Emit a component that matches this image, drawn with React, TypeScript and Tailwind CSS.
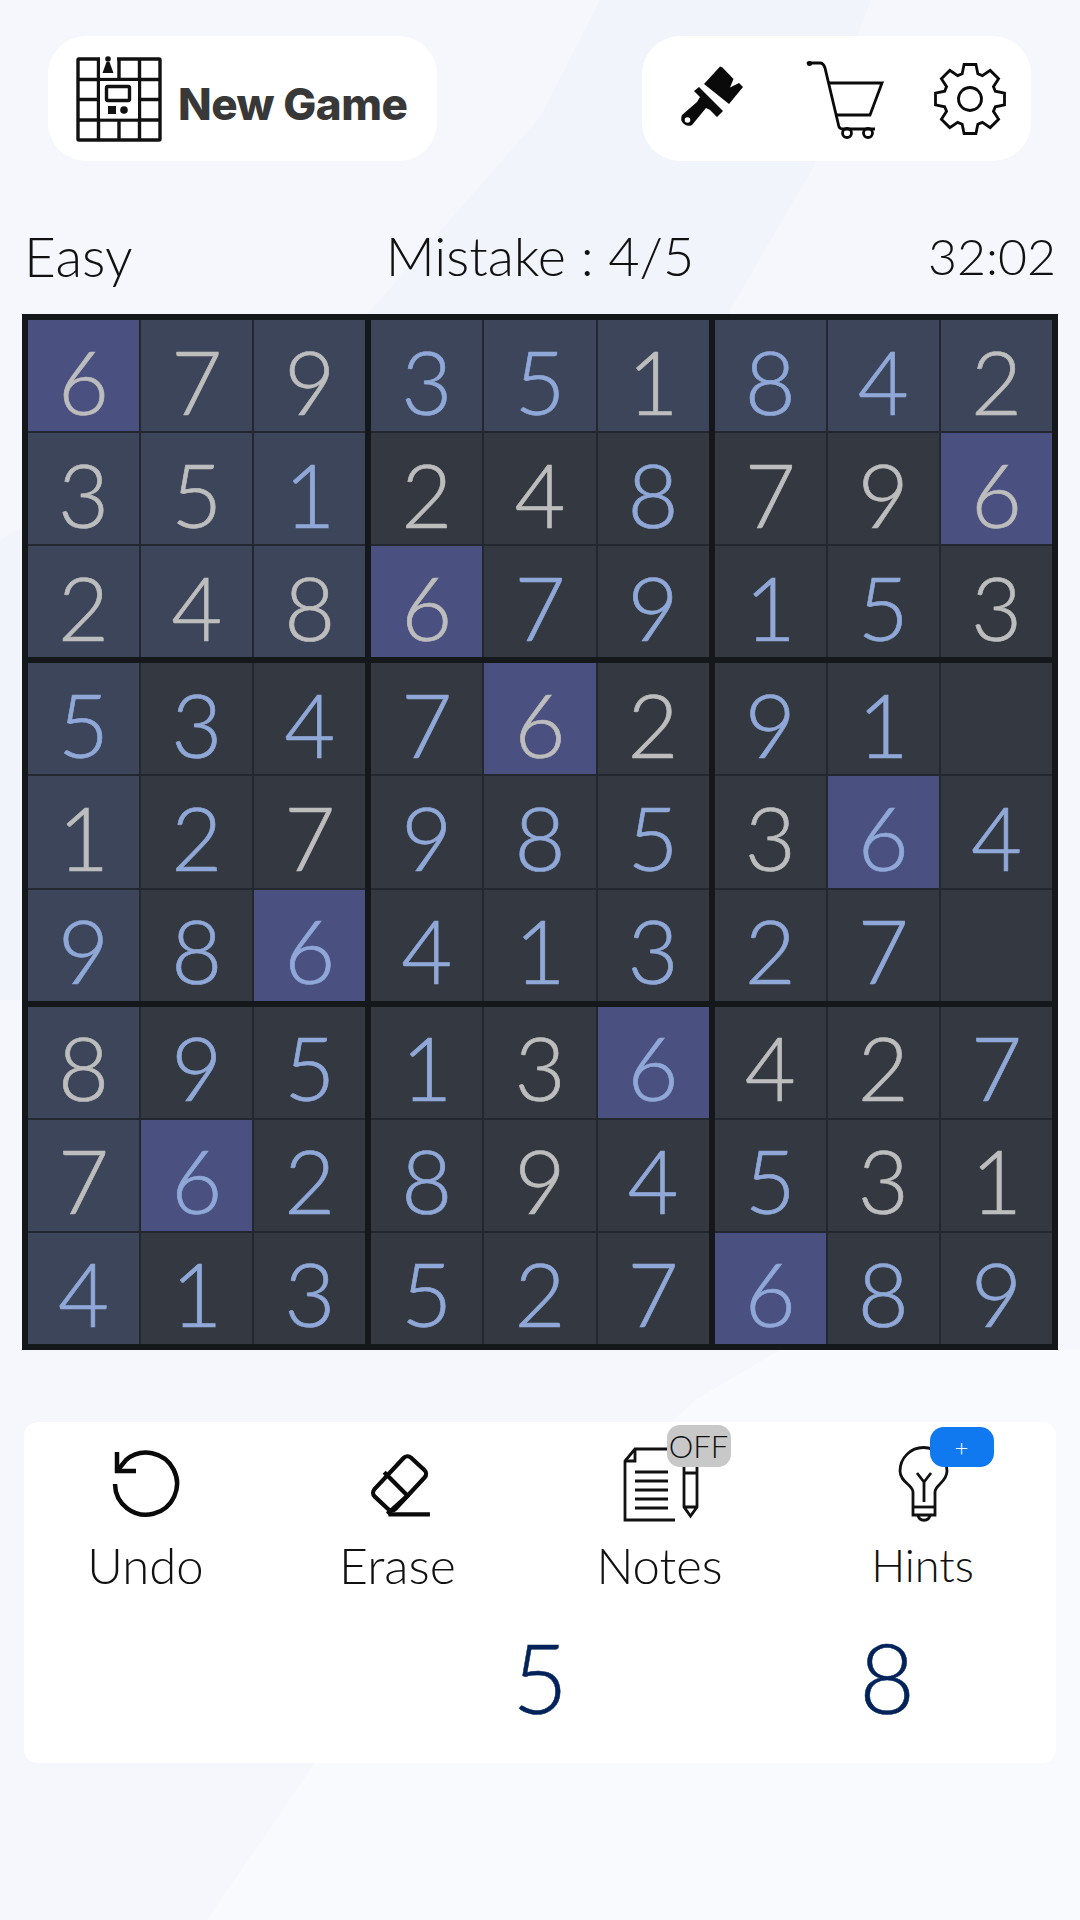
const F = "font-['Lato','Liberation_Sans',sans-serif]";

const BOARD = [
  "679351842",
  "351248796",
  "248679153",
  "534762910",
  "127985364",
  "986413270",
  "895136427",
  "762894531",
  "413527689",
];
const GREY = [
  "111001001",
  "110110111",
  "111100001",
  "000011000",
  "101000100",
  "000000000",
  "100010110",
  "100010011",
  "000000000",
];

function Cell({ r, c }: { r: number; c: number }) {
  const v = BOARD[r][c];
  const same = v === "6";
  const hi = r === 0 || c === 0 || (r < 3 && c < 3);
  const grey = GREY[r][c] === "1";
  return (
    <div
      className={`flex items-center justify-center pt-[10px] text-[88px] font-light leading-none [-webkit-text-stroke:0.7px] ${
        same ? "bg-[#4a5180]" : hi ? "bg-[#3c4559]" : "bg-[#343840]"
      } ${grey ? "text-[#bdbdbd]" : "text-[#8fa8d8]"}`}
    >
      {v === "0" ? "" : v}
    </div>
  );
}

function Box({ br, bc }: { br: number; bc: number }) {
  const cells = [];
  for (let r = 0; r < 3; r++)
    for (let c = 0; c < 3; c++)
      cells.push(<Cell key={`${r}${c}`} r={br * 3 + r} c={bc * 3 + c} />);
  return <div className="grid grid-cols-3 grid-rows-3 gap-[2px] bg-[#23272f]">{cells}</div>;
}

function BoardIcon() {
  return (
    <svg width="86" height="86" viewBox="0 0 86 86" fill="none" stroke="#111" strokeWidth="3.4">
      <rect x="2" y="3" width="82" height="81" rx="1" />
      <path d="M22.500 3V84M43 3V23M43 64V84M63.500 3V84M2 23.500H84M2 43.500H22.500M63.500 43.500H84M2 64H84" />
      <rect x="24" y="25" width="38" height="37.500" fill="#fff" stroke="none" />
      <rect x="30.500" y="30.500" width="23" height="14" rx="1.500" />
      <rect x="32" y="50" width="8" height="8" fill="#111" stroke="none" />
      <circle cx="48" cy="54" r="3.800" fill="#111" stroke="none" />
      <rect x="24" y="0" width="17" height="21.500" fill="#fff" stroke="none" />
      <circle cx="32" cy="3" r="2.800" fill="#111" stroke="none" />
      <path d="M30.500 6H33.500L37.500 17H26.500Z" fill="#111" stroke="none" />
    </svg>
  );
}

function BrushIcon() {
  return (
    <svg width="90" height="90" viewBox="0 0 90 90" fill="#0a0a0a">
      <path d="M52 12.500L54.500 13.500L65.500 25L62 33.500L71 29L75 33L61 50L36 30Z" strokeLinejoin="round" />
      <path
        fillRule="evenodd"
        d="M31 33L55 57L49 63L42 56L38 54L24 71A7.500 7.500 0 0 1 14 61L29 48L32 43L26 37ZM19.500 63.200A2.800 2.800 0 1 0 19.500 68.800A2.800 2.800 0 1 0 19.500 63.200Z"
      />
    </svg>
  );
}

function CartIcon() {
  return (
    <svg width="80" height="80" viewBox="0 0 80 80" fill="none" stroke="#0a0a0a" strokeWidth="2.800">
      <path d="M3 4H15C18 4 19 6 20 9L34 68" strokeLinecap="round" />
      <circle cx="4.500" cy="4.500" r="2.500" fill="#0a0a0a" stroke="none" />
      <path d="M23 24H77L65 56H30" />
      <path d="M34 68C36 70 36 70 40 70H70" />
      <circle cx="42" cy="74" r="4.500" />
      <circle cx="63" cy="74" r="4.500" />
    </svg>
  );
}

function GearIcon() {
  const n = 8;
  const ro = 35,
    ri = 26.5;
  let d = "";
  for (let i = 0; i < n; i++) {
    const a = (i / n) * Math.PI * 2 - Math.PI / 2;
    const w1 = 0.3,
      w2 = 0.17;
    const pts = [
      [ri, a - w1],
      [ro, a - w2],
      [ro, a + w2],
      [ri, a + w1],
    ];
    for (const [rad, t] of pts) {
      const x = 36 + rad * Math.cos(t);
      const y = 36 + rad * Math.sin(t);
      d += `${d ? "L" : "M"}${x.toFixed(2)} ${y.toFixed(2)}`;
    }
  }
  return (
    <svg width="72" height="72" viewBox="0 0 72 72" fill="none" stroke="#0a0a0a" strokeWidth="2.800" strokeLinejoin="miter">
      <path d={d + "Z"} />
      <circle cx="36" cy="36" r="11.500" />
    </svg>
  );
}

function UndoIcon() {
  return (
    <svg className="mb-[5px]" width="68" height="68" viewBox="0 0 68 68" fill="none" stroke="#0a0a0a" strokeWidth="4.500">
      <path d="M3 34A31 31 0 1 0 14 10L5 21" />
      <path d="M5 2V21H24" />
    </svg>
  );
}

function EraseIcon() {
  return (
    <svg className="mb-[6px]" width="66" height="66" viewBox="0 0 62 62" fill="none" stroke="#0a0a0a" strokeWidth="4" strokeLinejoin="round">
      <rect x="6" y="17.500" width="50" height="27" rx="5" transform="rotate(-47 31 29)" />
      <path d="M18 20L41 43" />
      <path d="M22 59.500H61" />
      <path d="M21 59L41 41" />
    </svg>
  );
}

function NotesIcon() {
  return (
    <svg width="80" height="78" viewBox="0 0 80 78" fill="none" stroke="#111" strokeWidth="2.800">
      <path d="M50 4H15L5 16V75H55" />
      <path d="M15 4V16H5" />
      <path d="M15 27H48M15 36H48M15 45H48M15 54H48M15 63H48" />
      <path d="M64 18H77V62L70.500 71L64 62ZM64 28H77M64 62H77" />
    </svg>
  );
}

function BulbIcon() {
  return (
    <svg width="52" height="78" viewBox="0 0 52 78" fill="none" stroke="#111" strokeWidth="2.800">
      <path d="M16 47C16 40 3 37 3 26A23.500 23.500 0 0 1 50 26C50 37 38 40 38 47V70H16Z" />
      <path d="M16 62H38" />
      <path d="M27 57V36M20 28L27 37L34 28" />
      <path d="M21 70C22 77 32 77 33 70" />
    </svg>
  );
}

function Action({ label, size, children }: { label: string; size: string; children: React.ReactNode }) {
  return (
    <div className="flex flex-col items-center">
      <div className="relative flex h-[101px] items-end justify-center">{children}</div>
      <span className={`mt-[16px] font-light leading-[52px] text-[#111] ${size}`}>{label}</span>
    </div>
  );
}

export default function App() {
  return (
    <div className={`relative h-[1920px] w-[1080px] overflow-hidden bg-[#f6f7fc] ${F}`}>
      <svg className="absolute inset-0" width="1080" height="1920" viewBox="0 0 1080 1920">
        <path d="M600 0H871L857 37L812 170L730 310L500 1000H0V540L362 320L540 117Z" fill="#f2f4fb" />
        <path d="M780 1350L695 1400L315 1763L207 1920H1080V1350Z" fill="#f9fafe" />
      </svg>

      <div className="relative flex flex-col">
        <div className="flex justify-between pl-[48px] pr-[49px] pt-[36px]">
          <div className="flex h-[125px] w-[389px] items-center gap-[16px] rounded-[38px] bg-white pl-[28px]">
            <BoardIcon />
            <span className="pt-[11px] font-['Inter',sans-serif] text-[44px] font-extrabold tracking-[-0.5px] text-[#383838]">New Game</span>
          </div>
          <div className="flex h-[125px] w-[389px] items-center rounded-[38px] bg-white pl-[26px]">
            <BrushIcon />
            <div className="ml-[47px]"><CartIcon /></div>
            <div className="ml-[49px]"><GearIcon /></div>
          </div>
        </div>

        <div className="mt-[59px] grid h-[72px] grid-cols-3 items-center px-[24px] text-[55px] font-light leading-none text-[#111]">
          <span>Easy</span>
          <span className="text-center whitespace-nowrap text-[54px]">Mistake : 4/5</span>
          <span className="text-right text-[50px]">32:02</span>
        </div>

        <div className="ml-[22px] mt-[22px] grid h-[1036px] w-[1036px] grid-cols-3 grid-rows-3 gap-[6px] bg-[#15181b] p-[6px]">
          {[0, 1, 2].map((br) =>
            [0, 1, 2].map((bc) => <Box key={`${br}${bc}`} br={br} bc={bc} />)
          )}
        </div>

        <div className="mx-[24px] mt-[72px] flex h-[341px] w-[1032px] flex-col rounded-[14px] bg-white">
          <div className="grid grid-cols-[243px_261px_263px_263px]">
            <Action label="Undo" size="text-[49px]"><UndoIcon /></Action>
            <Action label="Erase" size="text-[50px]"><EraseIcon /></Action>
            <Action label="Notes" size="text-[49px]">
              <NotesIcon />
              <span className="absolute left-[47px] top-[3px] flex h-[42px] w-[64px] items-center justify-center rounded-[13px] bg-[#c8c8c8] text-[31px] font-light leading-none text-[#111]">OFF</span>
            </Action>
            <Action label="Hints" size="text-[45px]">
              <BulbIcon />
              <span className="absolute left-[33px] top-[5px] flex h-[40px] w-[64px] items-center justify-center rounded-[14px] bg-[#1079f0] text-[24px] font-light leading-none text-white">+</span>
            </Action>
          </div>
          <div className="mt-[31px] grid grid-cols-3 text-center text-[96px] font-light leading-[110px] text-[#02235a] [-webkit-text-stroke:0.5px]">
            <span></span>
            <span>5</span>
            <span className="pl-[6px]">8</span>
          </div>
        </div>
      </div>
    </div>
  );
}
